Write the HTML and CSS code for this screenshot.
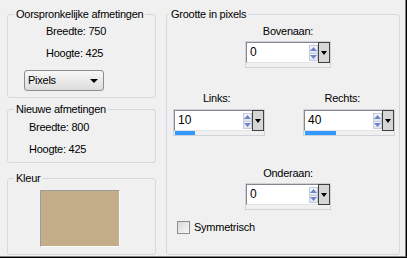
FILE: index.html
```html
<!DOCTYPE html>
<html>
<head>
<meta charset="utf-8">
<link rel="stylesheet" href="styles.css">
</head>
<body>
<div class="win">
  <div class="left">
    <fieldset class="grp g1">
      <legend>Oorspronkelijke afmetingen</legend>
      <div class="body">
        <div class="row"><span>Breedte:</span> <span>750</span></div>
        <div class="row"><span>Hoogte:</span> <span>425</span></div>
        <div class="select"><span>Pixels</span><span class="tri"></span></div>
      </div>
    </fieldset>
    <fieldset class="grp g2">
      <legend>Nieuwe afmetingen</legend>
      <div class="body">
        <div class="row"><span>Breedte:</span> <span>800</span></div>
        <div class="row"><span>Hoogte:</span> <span>425</span></div>
      </div>
    </fieldset>
    <fieldset class="grp g3">
      <legend>Kleur</legend>
      <div class="body">
        <div class="swatch"></div>
      </div>
    </fieldset>
  </div>
  <fieldset class="grp right">
    <legend>Grootte in pixels</legend>
    <div class="body">
      <div class="cell wide top-cell">
        <div class="lbl">Bovenaan:</div>
        <div class="spin s-mid">
          <div class="top"><div class="edit"><span class="val">0</span><span class="arrows"><span class="up"><svg width="7" height="4" viewBox="0 0 7 4"><path d="M3.5 0L7 4H0z" fill="#6f84c8"/></svg></span><span class="down"><svg width="7" height="4" viewBox="0 0 7 4"><path d="M0 0h7L3.5 4z" fill="#6f84c8"/></svg></span></span></div><div class="dd"><span class="tri"></span></div></div>
          <div class="bar"></div>
        </div>
      </div>
      <div class="cell side l">
        <div class="lbl">Links:</div>
        <div class="spin s-side">
          <div class="top"><div class="edit"><span class="val">10</span><span class="arrows"><span class="up"><svg width="7" height="4" viewBox="0 0 7 4"><path d="M3.5 0L7 4H0z" fill="#6f84c8"/></svg></span><span class="down"><svg width="7" height="4" viewBox="0 0 7 4"><path d="M0 0h7L3.5 4z" fill="#6f84c8"/></svg></span></span></div><div class="dd"><span class="tri"></span></div></div>
          <div class="bar"><div class="fill" style="width:22%"></div></div>
        </div>
      </div>
      <div class="cell side r">
        <div class="lbl">Rechts:</div>
        <div class="spin s-side">
          <div class="top"><div class="edit"><span class="val">40</span><span class="arrows"><span class="up"><svg width="7" height="4" viewBox="0 0 7 4"><path d="M3.5 0L7 4H0z" fill="#6f84c8"/></svg></span><span class="down"><svg width="7" height="4" viewBox="0 0 7 4"><path d="M0 0h7L3.5 4z" fill="#6f84c8"/></svg></span></span></div><div class="dd"><span class="tri"></span></div></div>
          <div class="bar"><div class="fill" style="width:34%"></div></div>
        </div>
      </div>
      <div class="cell wide bottom-cell">
        <div class="lbl">Onderaan:</div>
        <div class="spin s-mid">
          <div class="top"><div class="edit"><span class="val">0</span><span class="arrows"><span class="up"><svg width="7" height="4" viewBox="0 0 7 4"><path d="M3.5 0L7 4H0z" fill="#6f84c8"/></svg></span><span class="down"><svg width="7" height="4" viewBox="0 0 7 4"><path d="M0 0h7L3.5 4z" fill="#6f84c8"/></svg></span></span></div><div class="dd"><span class="tri"></span></div></div>
          <div class="bar"></div>
        </div>
      </div>
      <label class="check"><span class="box"></span><span>Symmetrisch</span></label>
    </div>
  </fieldset>
</div>
</body>
</html>
```
FILE: styles.css
```css
* { box-sizing: border-box; }
html, body { margin: 0; padding: 0; }
body {
  font: 11px/13px "Liberation Sans", Arial, sans-serif;
  letter-spacing: -0.25px;
  color: #000;
  background: #f0f0f0;
}
.win {
  width: 407px;
  height: 258px;
  display: flex;
  gap: 10px;
  padding: 8px 6px 2px 7px;
  background: #f0f0f0;
  border-right: 1px solid #000;
  border-bottom: 1px solid #000;
  box-shadow: inset -1px -1px 0 #808080;
}
.left {
  width: 149px;
  display: flex;
  flex-direction: column;
}
.grp {
  margin: 0;
  padding: 0;
  border: 1px solid #d5d8dc;
  border-radius: 3px;
  min-width: 0;
}
.grp legend {
  padding: 0 2px;
  margin-left: 6px;
  line-height: 13px;
}
.g1 { height: 90px; }
.g1 .body { padding: 4px 0 0 16px; }
.g1 .row { margin-left: 22px; }
.row + .row { margin-top: 9px; }
.g2 { height: 60px; margin-top: 5px; }
.g2 .body { padding: 5px 0 0 21px; }
.g3 { height: 83px; margin-top: 9px; }
.g3 .body { padding: 5px 0 0 32px; }

.select {
  width: 80px;
  height: 21px;
  margin-top: 10px;
  border: 1px solid #8c8c8c;
  border-radius: 3px;
  background: linear-gradient(#f8f8f8, #dcdcdc);
  display: flex;
  align-items: center;
  justify-content: space-between;
  padding: 0 5px 0 3px;
}
.tri {
  width: 0;
  height: 0;
  border-left: 4px solid transparent;
  border-right: 4px solid transparent;
  border-top: 4px solid #000;
}
.swatch {
  width: 80px;
  height: 57px;
  background: #c4ae89;
  border-top: 1px solid #9c9c9c;
  border-left: 1px solid #9c9c9c;
  border-right: 1px solid #fafafa;
  border-bottom: 1px solid #fafafa;
}

.right { width: 234px; height: 247px; }
.right legend { margin-left: 2px; }
.right .body {
  display: grid;
  grid-template-columns: 1fr 1fr;
  padding: 4px 4px 0 6px;
}
.cell { display: flex; flex-direction: column; }
.wide { grid-column: 1 / -1; align-items: center; padding-left: 8px; }
.side.l { align-items: flex-start; margin-top: 24px; }
.side.r { align-items: flex-end; margin-top: 24px; }
.bottom-cell { margin-top: 31px; }
.lbl { margin-bottom: 3px; }
.side.l .lbl { align-self: flex-start; margin-left: 30px; margin-bottom: 4px; }
.side.r .lbl { align-self: flex-end; margin-right: 35px; margin-bottom: 4px; }

.spin {
  border: 1px solid #cfd2d6;
  background: #f0f0f0;
  display: flex;
  flex-direction: column;
}
.s-mid { width: 86px; }
.s-side { width: 92px; }
.spin .top { display: flex; height: 21px; }
.edit {
  flex: 1;
  display: flex;
  background: #fff;
  border-top: 1px solid #828790;
  border-left: 1px solid #828790;
  border-bottom: 1px solid #e3e3e3;
}
.val { flex: 1; padding-left: 3px; line-height: 19px; font-size: 12px; letter-spacing: 0; }
.arrows {
  width: 9px;
  display: flex;
  flex-direction: column;
  padding: 2px 0 1px;
}
.arrows span {
  flex: 1;
  display: flex;
  align-items: center;
  justify-content: center;
  background: linear-gradient(#f4f6fb, #dfe4f0);
  border: 1px solid #c3cad9;
}
.arrows .down { border-top: none; }
.dd {
  width: 12px;
  border: 1px solid #404040;
  background: #d6d6d6;
  display: flex;
  align-items: center;
  justify-content: center;
}
.dd .tri { border-left-width: 3.5px; border-right-width: 3.5px; }
.bar { height: 4px; }
.fill { height: 4px; background: #3399ff; margin-left: 1px; }

.check {
  grid-column: 1 / -1;
  display: flex;
  align-items: center;
  gap: 4px;
  margin: 11px 0 0 4px;
}
.check .box {
  width: 13px;
  height: 13px;
  border: 1px solid #8f8f8f;
  background: linear-gradient(135deg, #d8d8d8, #f8f8f8);
}
```
